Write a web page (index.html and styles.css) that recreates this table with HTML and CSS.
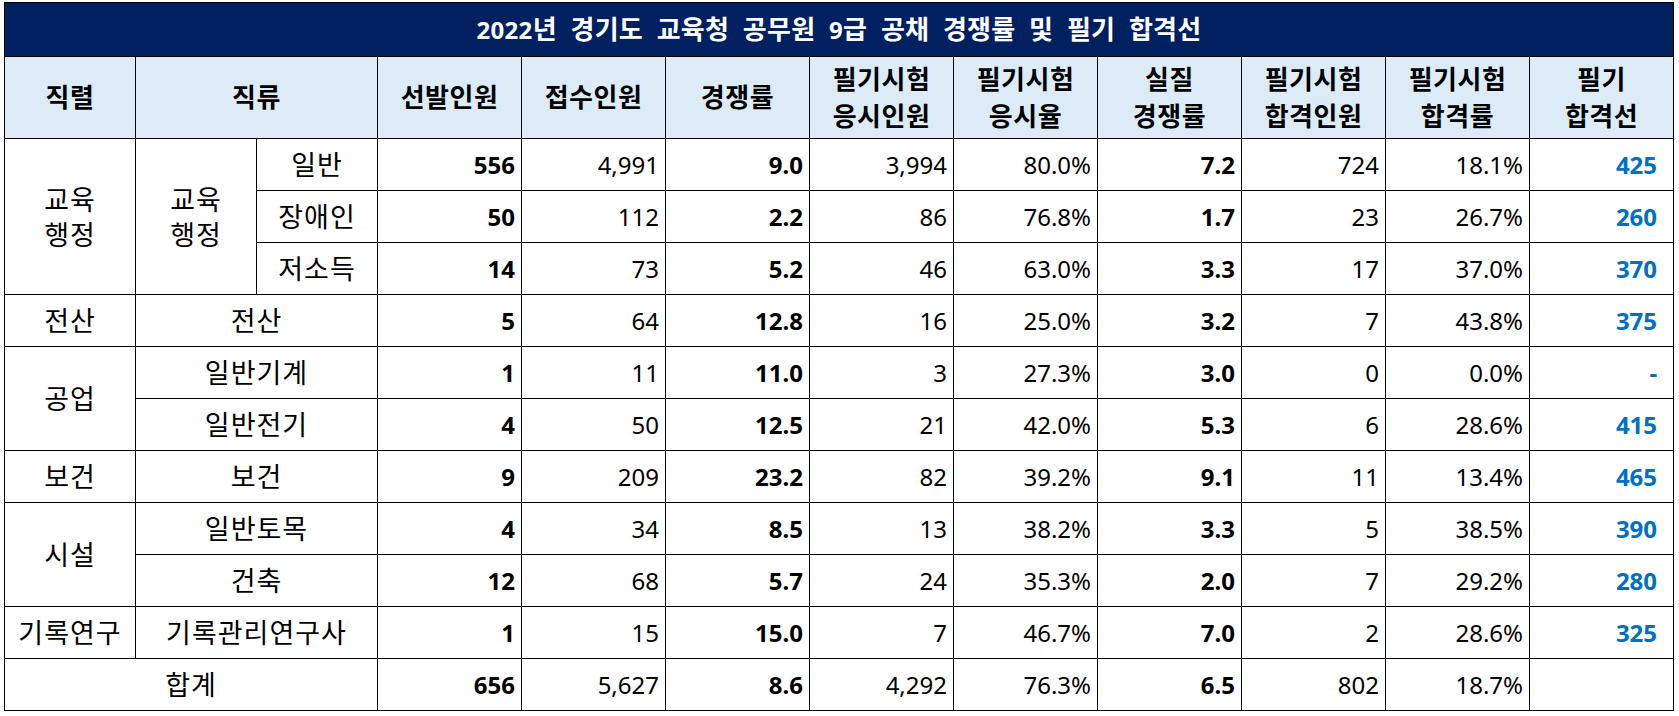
FILE: index.html
```html
<!DOCTYPE html>
<html lang="ko">
<head>
<meta charset="utf-8">
<title>2022년 경기도 교육청 공무원 9급 공채 경쟁률 및 필기 합격선</title>
<link rel="stylesheet" href="styles.css">
</head>
<body>
<div class="wrap">
<table class="sheet">
  <colgroup>
    <col class="c-series">
    <col class="c-kind">
    <col class="c-kind">
    <col class="c-num"><col class="c-num"><col class="c-num"><col class="c-num"><col class="c-num">
    <col class="c-num"><col class="c-num"><col class="c-num"><col class="c-num">
  </colgroup>
  <thead>
    <tr class="r-title"><th colspan="12" class="title"><span class="tnum">2022</span>년 경기도 교육청 공무원 <span class="tnum">9</span>급 공채 경쟁률 및 필기 합격선</th></tr>
    <tr class="r-head">
      <th>직렬</th>
      <th colspan="2">직류</th>
      <th>선발인원</th>
      <th>접수인원</th>
      <th>경쟁률</th>
      <th>필기시험<br>응시인원</th>
      <th>필기시험<br>응시율</th>
      <th>실질<br>경쟁률</th>
      <th>필기시험<br>합격인원</th>
      <th>필기시험<br>합격률</th>
      <th>필기<br>합격선</th>
    </tr>
  </thead>
  <tbody>
    <tr>
      <td rowspan="3" class="txt two">교육<br>행정</td>
      <td rowspan="3" class="txt two">교육<br>행정</td>
      <td class="txt">일반</td>
      <td class="b">556</td><td>4,991</td><td class="b">9.0</td><td>3,994</td><td>80.0%</td><td class="b">7.2</td><td>724</td><td>18.1%</td><td class="b blue">425</td>
    </tr>
    <tr>
      <td class="txt">장애인</td>
      <td class="b">50</td><td>112</td><td class="b">2.2</td><td>86</td><td>76.8%</td><td class="b">1.7</td><td>23</td><td>26.7%</td><td class="b blue">260</td>
    </tr>
    <tr>
      <td class="txt">저소득</td>
      <td class="b">14</td><td>73</td><td class="b">5.2</td><td>46</td><td>63.0%</td><td class="b">3.3</td><td>17</td><td>37.0%</td><td class="b blue">370</td>
    </tr>
    <tr>
      <td class="txt">전산</td>
      <td colspan="2" class="txt">전산</td>
      <td class="b">5</td><td>64</td><td class="b">12.8</td><td>16</td><td>25.0%</td><td class="b">3.2</td><td>7</td><td>43.8%</td><td class="b blue">375</td>
    </tr>
    <tr>
      <td rowspan="2" class="txt">공업</td>
      <td colspan="2" class="txt">일반기계</td>
      <td class="b">1</td><td>11</td><td class="b">11.0</td><td>3</td><td>27.3%</td><td class="b">3.0</td><td>0</td><td>0.0%</td><td class="b blue">-</td>
    </tr>
    <tr>
      <td colspan="2" class="txt">일반전기</td>
      <td class="b">4</td><td>50</td><td class="b">12.5</td><td>21</td><td>42.0%</td><td class="b">5.3</td><td>6</td><td>28.6%</td><td class="b blue">415</td>
    </tr>
    <tr>
      <td class="txt">보건</td>
      <td colspan="2" class="txt">보건</td>
      <td class="b">9</td><td>209</td><td class="b">23.2</td><td>82</td><td>39.2%</td><td class="b">9.1</td><td>11</td><td>13.4%</td><td class="b blue">465</td>
    </tr>
    <tr>
      <td rowspan="2" class="txt">시설</td>
      <td colspan="2" class="txt">일반토목</td>
      <td class="b">4</td><td>34</td><td class="b">8.5</td><td>13</td><td>38.2%</td><td class="b">3.3</td><td>5</td><td>38.5%</td><td class="b blue">390</td>
    </tr>
    <tr>
      <td colspan="2" class="txt">건축</td>
      <td class="b">12</td><td>68</td><td class="b">5.7</td><td>24</td><td>35.3%</td><td class="b">2.0</td><td>7</td><td>29.2%</td><td class="b blue">280</td>
    </tr>
    <tr>
      <td class="txt">기록연구</td>
      <td colspan="2" class="txt">기록관리연구사</td>
      <td class="b">1</td><td>15</td><td class="b">15.0</td><td>7</td><td>46.7%</td><td class="b">7.0</td><td>2</td><td>28.6%</td><td class="b blue">325</td>
    </tr>
    <tr>
      <td colspan="3" class="txt">합계</td>
      <td class="b">656</td><td>5,627</td><td class="b">8.6</td><td>4,292</td><td>76.3%</td><td class="b">6.5</td><td>802</td><td>18.7%</td><td></td>
    </tr>
  </tbody>
</table>
</div>
</body>
</html>
```

FILE: styles.css
```css
html, body {
  margin: 0;
  padding: 0;
  background: #ffffff;
}

.wrap {
  padding: 2px 0 0 4px;
}

.sheet {
  border-collapse: collapse;
  table-layout: fixed;
  width: 1670px;
  font-family: "Noto Sans", "Noto Sans CJK KR", sans-serif;
  font-size: 24px;
  color: #000000;
}

.c-series { width: 131px; }
.c-kind { width: 121px; }
.c-num { width: 144px; }

.sheet th,
.sheet td {
  border: 1px solid #000000;
  padding: 0 6px;
  white-space: nowrap;
  overflow: hidden;
}

.r-title { height: 54px; }
.r-head { height: 82px; }
.sheet tbody tr { height: 52px; }

.title {
  background: #002060;
  color: #ffffff;
  font-size: 26px;
  font-weight: 700;
  text-align: center;
  line-height: 30px;
  letter-spacing: 0.3px;
  word-spacing: 6.5px;
}

.title .tnum {
  font-size: 24px;
}

.r-head th {
  background: #ddebf7;
  font-size: 26px;
  font-weight: 700;
  text-align: center;
  line-height: 37px;
  letter-spacing: 0.5px;
}

.sheet td {
  text-align: right;
  line-height: 30px;
  vertical-align: middle;
}

.sheet td.txt {
  text-align: center;
  font-size: 27px;
  letter-spacing: 1px;
}

.sheet td.two {
  line-height: 35px;
}

.b { font-weight: 700; }

.blue {
  color: #0070c0;
}

.sheet td.blue {
  padding-right: 16px;
}
```
